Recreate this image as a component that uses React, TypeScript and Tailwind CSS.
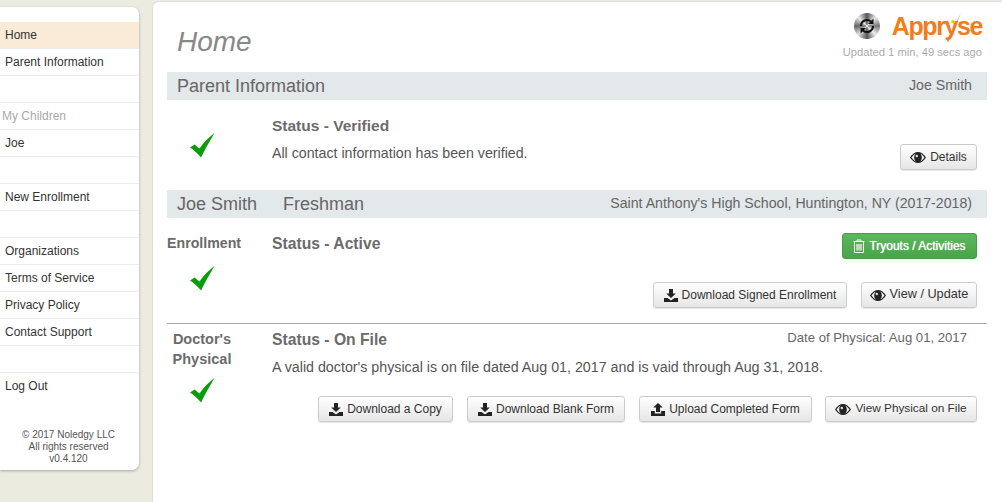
import React from 'react';

const SaveIcon = () => (
  <svg width="14" height="13" viewBox="0 0 14 13" className="shrink-0" fill="#222">
    <path d="M5 0h4v4.500h2.800L7 9 2.200 4.500H5z" />
    <path d="M0 9h3.500L7 11.500 10.500 9H14v4H0z" />
  </svg>
);

const UploadIcon = () => (
  <svg width="14" height="13" viewBox="0 0 14 13" className="shrink-0" fill="#222">
    <path d="M7 0l4.800 4.500H9V9H5V4.500H2.200z" />
    <path d="M0 8h3.800v2.500h6.400V8H14v5H0z" />
  </svg>
);

const EyeIcon = () => (
  <svg width="16" height="11" viewBox="0 0 16 11" className="shrink-0">
    <path d="M0 5.500C2.200 2 5 0 8 0s5.800 2 8 5.500C13.800 9 11 11 8 11S2.200 9 0 5.500z" fill="#222" />
    <path d="M1.500 5.500C3 3.200 4.800 1.800 6 1.500 4.800 2.300 4.200 3.800 4.200 5.500S4.800 8.700 6 9.500C4.800 9.200 3 7.800 1.500 5.500zM14.500 5.500C13 7.800 11.200 9.200 10 9.500c1.200-.8 1.800-2.300 1.800-4S11.200 2.300 10 1.500c1.200.3 3 1.700 4.500 4z" fill="#eee" />
    <circle cx="6.800" cy="4" r="1.200" fill="#ddd" />
  </svg>
);

const TrashIcon = () => (
  <svg width="12" height="14" viewBox="0 0 12 14" className="shrink-0" fill="none" stroke="#fff" strokeWidth="1">
    <path d="M.5 2.500h11M4 2.500V1h4v1.500M1.500 2.500v11h9v-11" />
    <path d="M4 5v6.500M6 5v6.500M8 5v6.500" strokeWidth="1.200" />
  </svg>
);

const Check = () => (
  <svg width="25" height="25" viewBox="0 0 25 25">
    <path d="M0 14.500 L4.500 11.500 L9.500 15.500 C13 10 18 5 24.500 0 C20 8 15 16 11 24.500 C7.500 20.500 4 17 0 14.500z" fill="#0b9c0b" />
  </svg>
);

const Btn = ({ icon, label, className }: { icon: React.ReactNode; label: string; className: string }) => (
  <button className={`h-[26px] flex items-center justify-center gap-[4px] rounded-[3px] border border-[#ccc] bg-gradient-to-b from-white to-[#e6e6e6] shadow-[0_1px_1px_rgba(0,0,0,0.1)] text-[#333] whitespace-nowrap ${className}`}>
    {icon}
    <span>{label}</span>
  </button>
);

const NavRow = ({ label, active, muted }: { label?: string; active?: boolean; muted?: boolean }) => (
  <div
    className={`h-[27px] flex items-center border-b border-[#eee] text-[12px] ${active ? 'bg-[#faebd7]' : ''} ${
      muted ? 'pl-[2px] text-[#aaa]' : 'pl-[5px] text-[#333]'
    }`}
  >
    {label}
  </div>
);

const SectionHeader = ({ children }: { children: React.ReactNode }) => (
  <div className="h-[28px] flex items-center justify-between bg-[#e3e8ea] pl-[10px] pr-[15px] text-[#666]">{children}</div>
);

export default function App() {
  return (
    <div className="w-[1002px] h-[502px] overflow-hidden bg-[#ecebdf] flex items-start font-['Liberation_Sans',Arial,sans-serif]">
      {/* Sidebar */}
      <aside className="w-[139px] h-[463px] mt-[7px] shrink-0 flex flex-col bg-white rounded-r-[7px] shadow-[0_1px_3px_rgba(0,0,0,0.3)] pt-[15px]">
        <NavRow label="Home" active />
        <NavRow label="Parent Information" />
        <NavRow />
        <NavRow label="My Children" muted />
        <NavRow label="Joe" />
        <NavRow />
        <NavRow label="New Enrollment" />
        <NavRow />
        <NavRow label="Organizations" />
        <NavRow label="Terms of Service" />
        <NavRow label="Privacy Policy" />
        <NavRow label="Contact Support" />
        <NavRow />
        <div className="h-[27px] flex items-center pl-[5px] pb-[1px] text-[12px] text-[#333]">Log Out</div>
        <div className="mt-[29px] pr-[2px] text-center text-[10px] leading-[12px] text-[#555]">
          <div>© 2017 Noledgy LLC</div>
          <div>All rights reserved</div>
          <div>v0.4.120</div>
        </div>
      </aside>

      {/* Main panel */}
      <main className="w-[850px] h-[501px] ml-[13px] mt-[1px] shrink-0 bg-white rounded-tl-[7px] border-l border-t border-[#ddd] pl-[14px] pr-[15px]">
        <div className="h-[70px] flex justify-between">
          <h1 className="pl-[10px] pt-[22px] text-[28px] leading-[36px] italic text-[#888]">Home</h1>
          <div className="flex flex-col items-end pt-[9px]">
            <div className="flex items-center h-[30px] pr-[5px]">
              <div className="w-[26px] h-[26px] rounded-full bg-[conic-gradient(#555,#e8e8e8,#777,#eee,#555,#ddd,#666,#e8e8e8,#555)] flex items-center justify-center">
                <svg width="16" height="16" viewBox="0 0 16 16">
                  <path d="M2 8a6 6 0 0 1 10-4.500M14 8a6 6 0 0 1-10 4.500" fill="none" stroke="#111" strokeWidth="2" />
                  <path d="M14.500 0.500v5.500H9zM1.500 15.500V10H7z" fill="#111" />
                </svg>
              </div>
              <span className="relative ml-[12px] text-[25px] leading-[30px] font-bold text-[#f07d1e] tracking-[-1.400px]">
                Appryse
                <svg width="16" height="31" viewBox="0 0 16 31" className="absolute left-[54px] top-0">
                  <path d="M15.500 1 L0.500 30.500 L2.500 30.500 L9 16z" fill="#f07d1e" />
                  <circle cx="7" cy="10.700" r="1.800" fill="#f5c21e" />
                </svg>
              </span>
            </div>
            <div className="mt-[5px] pr-[5px] text-[11.200px] leading-[13px] text-[#aaa]">Updated 1 min, 49 secs ago</div>
          </div>
        </div>

        <div>
          <SectionHeader>
            <span className="text-[18px]">Parent Information</span>
            <span className="text-[14.200px]">Joe Smith</span>
          </SectionHeader>

          <div className="h-[90px] flex">
            <div className="w-[105px] shrink-0 pl-[23px] pt-[33px]"><Check /></div>
            <div className="flex-1 pr-[10px] pt-[16px]">
              <div className="text-[15.500px] leading-[20px] font-bold text-[#6b6b6b]">Status - Verified</div>
              <div className="mt-[7px] text-[14.200px] leading-[20px] text-[#555]">All contact information has been verified.</div>
              <div className="flex justify-end mt-[-19px]">
                <Btn icon={<EyeIcon />} label="Details" className="w-[77px] text-[12px]" />
              </div>
            </div>
          </div>

          <SectionHeader>
            <span className="flex text-[18px]">
              <span className="w-[106px]">Joe Smith</span>
              <span>Freshman</span>
            </span>
            <span className="text-[14.150px]">Saint Anthony's High School, Huntington, NY (2017-2018)</span>
          </SectionHeader>

          <div className="h-[106px] flex border-b border-[#aaa]">
            <div className="w-[105px] shrink-0 pt-[16px]">
              <div className="w-[72px] text-center text-[14.200px] leading-[18px] font-bold text-[#6b6b6b] mb-[14px]">Enrollment</div>
              <div className="w-[70px] flex justify-center"><Check /></div>
            </div>
            <div className="flex-1 pr-[10px] pt-[16px]">
              <div className="flex justify-between items-start">
                <div className="text-[15.700px] leading-[20px] font-bold text-[#6b6b6b]">Status - Active</div>
                <button className="mt-[-1px] w-[135px] h-[26px] flex items-center justify-center gap-[4px] rounded-[3px] border border-[#4a9c4a] bg-gradient-to-b from-[#5cb85c] to-[#47a447] text-[12px] text-white [text-shadow:0_0_1px_#fff]">
                  <TrashIcon />
                  <span>Tryouts / Activities</span>
                </button>
              </div>
              <div className="flex justify-end gap-[14px] mt-[23px]">
                <Btn icon={<SaveIcon />} label="Download Signed Enrollment" className="w-[194px] text-[12px]" />
                <Btn icon={<EyeIcon />} label="View / Update" className="w-[116px] text-[12.700px]" />
              </div>
            </div>
          </div>

          <div className="flex">
            <div className="w-[105px] shrink-0 pt-[5px]">
              <div className="w-[70px] text-center text-[14.500px] leading-[20px] font-bold text-[#6b6b6b]">
                Doctor's<br />Physical
              </div>
              <div className="w-[70px] flex justify-center mt-[9px]"><Check /></div>
            </div>
            <div className="flex-1 pr-[10px] pt-[6px]">
              <div className="flex justify-between items-start">
                <div className="text-[15.700px] leading-[20px] font-bold text-[#6b6b6b]">Status - On File</div>
                <div className="mr-[10px] text-[13.150px] leading-[16px] text-[#666]">Date of Physical: Aug 01, 2017</div>
              </div>
              <div className="mt-[7px] text-[14.250px] leading-[20px] text-[#555]">A valid doctor's physical is on file dated Aug 01, 2017 and is vaid through Aug 31, 2018.</div>
              <div className="flex justify-end gap-[14px] mt-[19px]">
                <Btn icon={<SaveIcon />} label="Download a Copy" className="w-[135px] text-[12px]" />
                <Btn icon={<SaveIcon />} label="Download Blank Form" className="w-[158px] text-[12px]" />
                <Btn icon={<UploadIcon />} label="Upload Completed Form" className="w-[173px] text-[12px]" />
                <Btn icon={<EyeIcon />} label="View Physical on File" className="w-[152px] -ml-[1px] text-[11.800px]" />
              </div>
            </div>
          </div>
        </div>
      </main>
    </div>
  );
}
